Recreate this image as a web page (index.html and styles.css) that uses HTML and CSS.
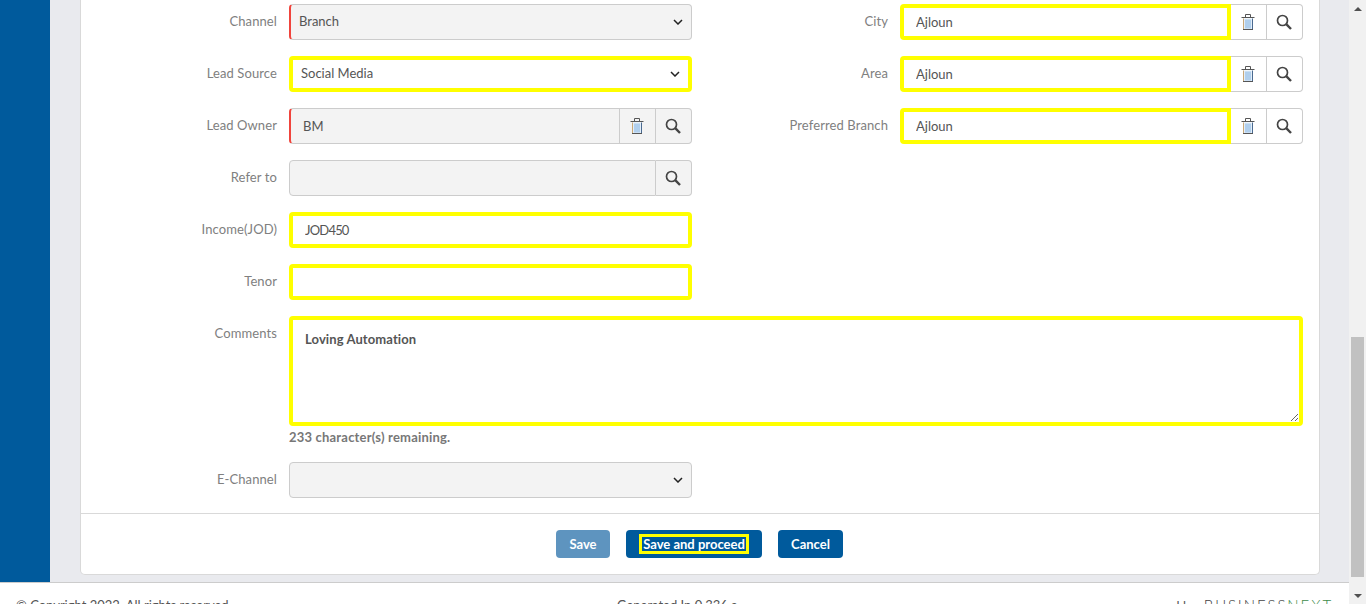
FILE: index.html
```html
<!DOCTYPE html>
<html lang="en">

<head>
    <meta charset="UTF-8">
    <meta name="viewport" content="width=device-width, initial-scale=1.0">
    <title>Edit Lead</title>
    <link rel="stylesheet" href="styles.css">
</head>

<body>
    <svg class="icon-defs" width="0" height="0" aria-hidden="true">
        <symbol id="icon-trash" viewBox="0 0 14 16">
            <path d="M2.500 4.500h9v11h-9z" fill="#e3eef9" />
            <path d="M5 5.500v9M7 5.500v9M9 5.500v9" stroke="#7fb0e0" stroke-width="1" fill="none" />
            <path d="M2.500 4.500v11" stroke="#c9a878" stroke-width="1" fill="none" />
            <path d="M11.500 4.500v11" stroke="#4a6a90" stroke-width="1" fill="none" />
            <path d="M2 15.500h10" stroke="#555" stroke-width="1" fill="none" />
            <path d="M0.500 3.500h13" stroke="#555" stroke-width="1" fill="none" />
            <path d="M4.500 3V0.500h5V3" stroke="#555" stroke-width="1" fill="none" />
        </symbol>
        <symbol id="icon-search" viewBox="0 0 16 16">
            <circle cx="6.500" cy="6.500" r="5" fill="none" stroke="#444" stroke-width="1.700" />
            <path d="M10.200 10.200l4.800 4.800" stroke="#444" stroke-width="2.400" fill="none" />
        </symbol>
        <symbol id="icon-chevron" viewBox="0 0 10 6">
            <path d="M1 1l4 4 4-4" stroke="#222" stroke-width="1.500" fill="none" />
        </symbol>
    </svg>

    <div class="page">
        <div class="main">
            <div class="workspace">
                <div class="sidebar"></div>
                <div class="content">
                    <div class="card">
                        <div class="form-grid">
                            <label class="field-label">Channel</label>
                            <div class="select-wrap">
                                <select class="control select mandatory" disabled>
                                    <option>Branch</option>
                                </select>
                                <svg class="chevron"><use href="#icon-chevron" /></svg>
                            </div>
                            <label class="field-label">City</label>
                            <div class="lookup">
                                <input class="control highlighted" type="text" value="Ajloun">
                                <button class="lookup-btn"><svg class="trash"><use href="#icon-trash" /></svg></button>
                                <button class="lookup-btn last"><svg class="search"><use href="#icon-search" /></svg></button>
                            </div>

                            <label class="field-label">Lead Source</label>
                            <div class="select-wrap">
                                <select class="control select highlighted">
                                    <option>Social Media</option>
                                </select>
                                <svg class="chevron inset"><use href="#icon-chevron" /></svg>
                            </div>
                            <label class="field-label">Area</label>
                            <div class="lookup">
                                <input class="control highlighted" type="text" value="Ajloun">
                                <button class="lookup-btn"><svg class="trash"><use href="#icon-trash" /></svg></button>
                                <button class="lookup-btn last"><svg class="search"><use href="#icon-search" /></svg></button>
                            </div>

                            <label class="field-label">Lead Owner</label>
                            <div class="lookup off">
                                <input class="control mandatory" type="text" value="BM" disabled>
                                <button class="lookup-btn"><svg class="trash"><use href="#icon-trash" /></svg></button>
                                <button class="lookup-btn last"><svg class="search"><use href="#icon-search" /></svg></button>
                            </div>
                            <label class="field-label">Preferred Branch</label>
                            <div class="lookup">
                                <input class="control highlighted" type="text" value="Ajloun">
                                <button class="lookup-btn"><svg class="trash"><use href="#icon-trash" /></svg></button>
                                <button class="lookup-btn last"><svg class="search"><use href="#icon-search" /></svg></button>
                            </div>

                            <label class="field-label">Refer to</label>
                            <div class="lookup off">
                                <input class="control" type="text" disabled>
                                <button class="lookup-btn last"><svg class="search"><use href="#icon-search" /></svg></button>
                            </div>
                            <span class="blank"></span>

                            <label class="field-label">Income(JOD)</label>
                            <input class="control highlighted amount" type="text" value="JOD450">
                            <span class="blank"></span>

                            <label class="field-label">Tenor</label>
                            <input class="control highlighted" type="text">
                            <span class="blank"></span>

                            <label class="field-label">Comments</label>
                            <div class="wide">
                                <textarea class="control comments highlighted">Loving Automation</textarea>
                                <div class="remaining">233 character(s) remaining.</div>
                            </div>

                            <label class="field-label">E-Channel</label>
                            <div class="select-wrap">
                                <select class="control select" disabled>
                                    <option></option>
                                </select>
                                <svg class="chevron"><use href="#icon-chevron" /></svg>
                            </div>
                            <span class="blank"></span>
                        </div>

                        <div class="actions">
                            <button class="btn btn-muted">Save</button>
                            <button class="btn btn-proceed"><span class="marked">Save and proceed</span></button>
                            <button class="btn">Cancel</button>
                        </div>
                    </div>
                </div>
            </div>

            <div class="footer">
                <span class="footer-copy">© Copyright 2022. All rights reserved.</span>
                <span class="footer-time">Generated In 0.336 s</span>
                <span class="footer-brand">powered by <b class="brand">BUSINESS<i>NEXT</i></b></span>
            </div>
        </div>

        <div class="scrollbar">
            <span class="arrow arrow-up"></span>
            <div class="track"><div class="thumb"></div></div>
            <span class="arrow arrow-down"></span>
        </div>
    </div>
</body>

</html>
```

FILE: styles.css
```css
* {
    box-sizing: border-box;
}

html,
body {
    margin: 0;
    height: 604px;
    overflow: hidden;
}

body {
    font-family: "Lato", "Liberation Sans", sans-serif;
    font-size: 13px;
    color: #555;
    background-color: #fff;
}

.icon-defs {
    position: absolute;
}

.page {
    display: flex;
    height: 604px;
}

.main {
    width: 1349px;
    display: flex;
    flex-direction: column;
}

.workspace {
    display: flex;
    height: 582px;
    flex-shrink: 0;
}

.sidebar {
    width: 50px;
    background-color: #005a9c;
}

.content {
    flex: 1;
    padding: 0 29px 7px 30px;
    background-color: #e9eaee;
}

.card {
    height: 575px;
    background-color: #fff;
    border: 1px solid #d9d9d9;
    border-top: none;
    border-radius: 0 0 5px 5px;
}

.form-grid {
    display: grid;
    grid-template-columns: 196px 403px 184px 403px;
    grid-template-rows: repeat(6, 36px) 130px 36px;
    gap: 16px 12px;
    padding-top: 4px;
    height: 513px;
}

.field-label {
    text-align: right;
    line-height: 34px;
    color: #808080;
    letter-spacing: 0.100px;
}

.control {
    width: 100%;
    height: 36px;
    padding: 0 12px;
    font-family: inherit;
    font-size: 13px;
    color: #555;
    background-color: #fff;
    border: 1px solid #ccc;
    border-radius: 4px;
    outline: none;
}

.control:disabled {
    background-color: #f3f3f3;
    opacity: 1;
}

.amount {
    letter-spacing: -0.800px;
}

.select-wrap {
    position: relative;
}

.select {
    appearance: none;
    padding: 0 0 2px 8px;
}

.chevron {
    position: absolute;
    top: 15px;
    right: 9px;
    width: 10px;
    height: 6px;
    pointer-events: none;
}

.chevron.inset {
    right: 12px;
}

.mandatory {
    border-left: 2px solid #f0443c;
}

.highlighted {
    border: 4px solid #ff0;
}

.blank {
    grid-column: span 2;
}

.lookup {
    display: flex;
}

.lookup .control {
    flex: 1;
    min-width: 0;
    border-radius: 4px 0 0 4px;
}

.lookup-btn {
    display: flex;
    align-items: center;
    justify-content: center;
    width: 36px;
    height: 36px;
    padding: 0;
    background-color: #fff;
    border: 1px solid #ccc;
    border-left: none;
}

.lookup-btn.last {
    border-radius: 0 4px 4px 0;
}

.lookup.off .lookup-btn {
    background-color: #f3f3f3;
}

.trash {
    width: 14px;
    height: 16px;
    margin-right: 1px;
}

.search {
    width: 16px;
    height: 16px;
    margin-right: 1px;
}

.wide {
    grid-column: span 3;
}

.comments {
    display: block;
    height: 110px;
    padding: 11px 12px;
    font-weight: 700;
    letter-spacing: 0.100px;
}

.remaining {
    margin-top: 1px;
    line-height: 20px;
    color: #777;
    font-weight: 700;
    letter-spacing: 0.200px;
}

.actions {
    display: flex;
    justify-content: center;
    gap: 16px;
    height: 61px;
    padding: 16px 1px 0 0;
    border-top: 1px solid #d9d9d9;
}

.btn {
    width: 65px;
    height: 28px;
    padding: 0;
    font-family: inherit;
    font-size: 13px;
    font-weight: 700;
    color: #fff;
    background-color: #005a9c;
    border: none;
    border-radius: 4px;
}

.btn-muted {
    width: 54px;
    background-color: #5e94bf;
}

.btn-proceed {
    width: 136px;
}

.marked {
    display: inline-block;
    padding: 0 1px;
    line-height: 14px;
    border: 3px solid #ff0;
}

.footer {
    position: relative;
    height: 40px;
    flex-shrink: 0;
    padding: 13px 16px 0;
    border-top: 1px solid #ccc;
    line-height: 18px;
    display: flex;
    justify-content: space-between;
}

.footer-time {
    position: absolute;
    left: 617px;
}

.brand {
    margin-left: 4px;
    font-weight: 300;
    font-size: 15px;
    letter-spacing: 1.900px;
    color: #444;
}

.brand i {
    font-style: normal;
    color: #3d8b4a;
}

.scrollbar {
    width: 17px;
    display: flex;
    flex-direction: column;
    background-color: #f1f1f1;
}

.arrow {
    width: 17px;
    height: 17px;
    flex-shrink: 0;
    display: flex;
    align-items: center;
    justify-content: center;
}

.arrow::before {
    content: "";
    border-left: 4px solid transparent;
    border-right: 4px solid transparent;
}

.arrow-up::before {
    border-bottom: 4px solid #505050;
}

.arrow-down::before {
    border-top: 4px solid #505050;
}

.track {
    flex: 1;
    padding: 320px 2px 10px;
}

.thumb {
    height: 100%;
    background-color: #c1c1c1;
}
```
